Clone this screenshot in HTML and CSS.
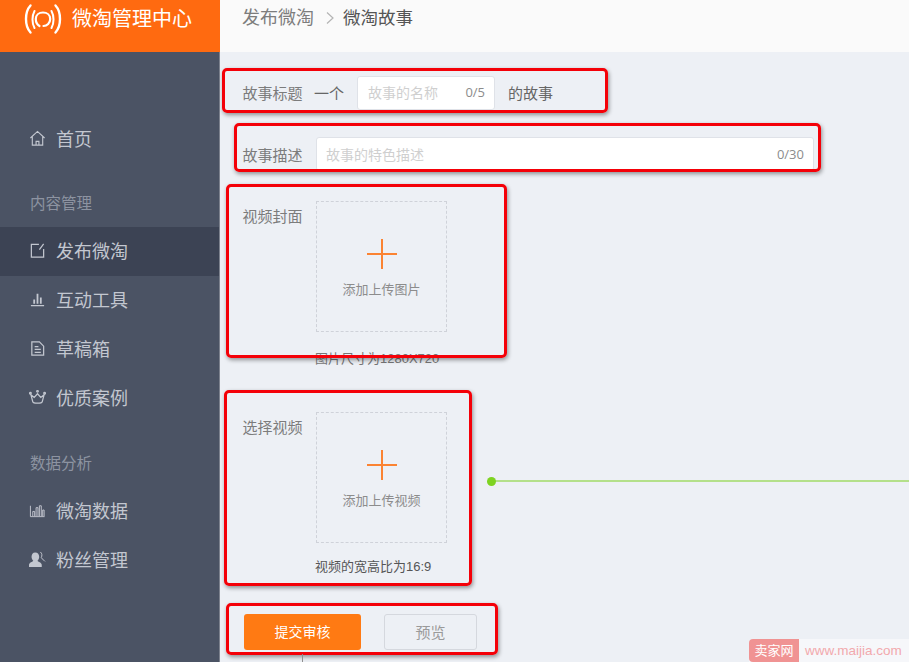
FILE: index.html
```html
<!DOCTYPE html>
<html lang="zh-CN">
<head>
    <meta charset="UTF-8">
    <meta name="viewport" content="width=device-width, initial-scale=1.0">
    <title>发布微淘</title>
    <link rel="stylesheet" href="styles.css">
</head>
<body>
    <div class="page">
        <aside class="sidebar">
            <div class="brand">
                <svg class="brand-logo" viewBox="0 0 38 32" fill="none" stroke="#fff" stroke-linecap="round">
                    <path d="M6.500 2.500C0.500 9 0.500 23 6.500 29.500" stroke-width="2.400"/>
                    <path d="M31.500 2.500C37.500 9 37.500 23 31.500 29.500" stroke-width="2.400"/>
                    <path d="M10.500 8C7.800 13 7.800 20 10.500 25" stroke-width="2"/>
                    <path d="M27.500 8C30.200 13 30.200 20 27.500 25" stroke-width="2"/>
                    <path d="M15.500 23C13 21.500 11.800 19 11.800 16C11.800 12 15 9.500 19 9.500C23 9.500 26.200 12 26.200 16C26.200 20 23 22.800 19.500 23" stroke-width="2.200"/>
                </svg>
                <span>微淘管理中心</span>
            </div>

            <nav class="nav">
                <a class="nav-item" href="#">
                    <svg class="nav-icon" viewBox="0 0 18 18" fill="none" stroke="currentColor" stroke-width="1.200">
                        <path d="M1.500 8.500L9 1.500L16.500 8.500M3.500 7V16H14.500V7M7.500 16V12H10.500V16"/>
                    </svg>
                    首页
                </a>

                <div class="nav-label">内容管理</div>
                <a class="nav-item active" href="#">
                    <svg class="nav-icon" viewBox="0 0 18 18" fill="none" stroke="currentColor" stroke-width="1.300">
                        <path d="M10.500 2.500H2.500V16H15.500V7.500M11 8L15.500 2"/>
                    </svg>
                    发布微淘
                </a>
                <a class="nav-item" href="#">
                    <svg class="nav-icon" viewBox="0 0 18 18" fill="none" stroke="currentColor">
                        <path d="M2 15.500H16" stroke-width="1.300"/>
                        <path d="M5.500 13.500V9M9 13.500V3M12.500 13.500V7" stroke-width="1.900"/>
                    </svg>
                    互动工具
                </a>
                <a class="nav-item" href="#">
                    <svg class="nav-icon" viewBox="0 0 18 18" fill="none" stroke="currentColor" stroke-width="1.300">
                        <path d="M3 2H11L15.500 6.500V16H3ZM6 7H10M6 10H12.500M6 13H12.500"/>
                    </svg>
                    草稿箱
                </a>
                <a class="nav-item" href="#">
                    <svg class="nav-icon" viewBox="0 0 18 18" fill="none" stroke="currentColor" stroke-width="1.300">
                        <path d="M2 6L4 13.500C4.500 15.500 13.500 15.500 14 13.500L16 6L12.500 9L9 5L5.500 9Z"/>
                        <circle cx="1.500" cy="4.500" r="0.900"/>
                        <circle cx="9" cy="2.500" r="0.900"/>
                        <circle cx="16.500" cy="4.500" r="0.900"/>
                    </svg>
                    优质案例
                </a>

                <div class="nav-label nav-label-data">数据分析</div>
                <a class="nav-item" href="#">
                    <svg class="nav-icon" viewBox="0 0 18 18" fill="none" stroke="currentColor" stroke-width="1">
                        <path d="M1.500 4V15.500H16.500M4 15V10H6V15M7.500 15V6H9.500V15M11 15V4H13V15M14.500 15V8.500H16V15"/>
                    </svg>
                    微淘数据
                </a>
                <a class="nav-item" href="#">
                    <svg class="nav-icon" viewBox="0 0 18 18" fill="currentColor">
                        <path d="M6.500 1.500C9.500 1.500 10.800 3.800 10.800 6.200C10.800 8 10 9.500 9 10.300C9.500 11.500 13.500 12 13.500 14.800V17H0V14.800C0 12 4 11.500 4.500 10.300C3.500 9.500 2.700 8 2.700 6.200C2.700 3.800 4 1.500 6.500 1.500Z"/>
                        <path d="M12 1C14 2.500 14 5 13 7C14 9 16 9.500 17 11" fill="none" stroke="currentColor" stroke-width="1"/>
                    </svg>
                    粉丝管理
                </a>
            </nav>
        </aside>

        <main class="main">
            <div class="crumbs">
                <span>发布微淘</span>
                <svg class="crumb-sep" viewBox="0 0 10 14" fill="none" stroke="#b4b4b4" stroke-width="1.200">
                    <path d="M2 1.500L8 7L2 12.500"/>
                </svg>
                <span class="crumb-current">微淘故事</span>
            </div>

            <form class="form">
                <div class="row row-title">
                    <label class="row-label">故事标题</label>
                    <span class="fix-text">一个</span>
                    <div class="field field-short">
                        <span class="placeholder">故事的名称</span>
                        <span class="count">0/5</span>
                    </div>
                    <span class="fix-text">的故事</span>
                </div>

                <div class="row row-desc">
                    <label class="row-label">故事描述</label>
                    <div class="field field-long">
                        <span class="placeholder">故事的特色描述</span>
                        <span class="count">0/30</span>
                    </div>
                </div>

                <div class="row row-upload">
                    <label class="row-label upload-label">视频封面</label>
                    <div class="upload">
                        <div class="plus"></div>
                        <span>添加上传图片</span>
                    </div>
                </div>
                <p class="tip">图片尺寸为1280X720</p>

                <div class="row row-video">
                    <label class="row-label upload-label">选择视频</label>
                    <div class="upload">
                        <div class="plus"></div>
                        <span>添加上传视频</span>
                    </div>
                </div>
                <p class="tip tip-video">视频的宽高比为16:9</p>

                <div class="actions">
                    <button type="button" class="btn btn-primary">提交审核</button>
                    <button type="button" class="btn btn-ghost">预览</button>
                </div>
            </form>
        </main>

        <!-- annotations drawn on top of the screenshot -->
        <div class="mark mark-title"></div>
        <div class="mark mark-desc"></div>
        <div class="mark mark-cover"></div>
        <div class="mark mark-video"></div>
        <div class="mark mark-actions"></div>

        <div class="callout"></div>
        <div class="stem"></div>

        <div class="watermark">
            <span class="watermark-name">卖家网</span>
            <span class="watermark-url">www.maijia.com</span>
        </div>
    </div>
</body>
</html>
```

FILE: styles.css
```css
* {
    margin: 0;
    padding: 0;
    box-sizing: border-box;
}

html, body {
    height: 100%;
    overflow: hidden;
}

body {
    font-family: "Liberation Sans", "Noto Sans CJK SC", sans-serif;
    background-color: #edf0f5;
    color: #666;
}

.page {
    position: relative;
    display: flex;
    height: 662px;
    overflow: hidden;
}

/* sidebar */
.sidebar {
    width: 220px;
    flex-shrink: 0;
    background: #4b5364;
    border-right: 1px solid #7d828e;
}

.brand {
    display: flex;
    align-items: flex-start;
    gap: 10px;
    height: 52px;
    margin-right: -1px;
    padding: 3px 0 0 24px;
    background: #ff6a10;
    color: #fff;
    font-size: 20px;
    line-height: 32px;
}

.brand-logo {
    width: 38px;
    height: 32px;
    flex-shrink: 0;
}

.nav {
    padding-top: 63px;
}

.nav-item {
    display: flex;
    align-items: center;
    gap: 10px;
    height: 49px;
    padding: 0 0 3px 29px;
    color: #c3c7d0;
    font-size: 18px;
    text-decoration: none;
}

.nav-item.active {
    background: #3c4354;
}

.nav-icon {
    width: 17px;
    height: 17px;
    margin-top: 1px;
    flex-shrink: 0;
}

.nav-label {
    height: 63px;
    padding: 30px 0 0 30px;
    color: #8d93a1;
    font-size: 15.5px;
    line-height: 20px;
}

.nav-label-data {
    height: 64px;
    padding-top: 31px;
}

/* main column */
.main {
    flex: 1;
    min-width: 0;
}

.crumbs {
    display: flex;
    align-items: flex-start;
    height: 52px;
    padding-left: 22px;
    background: #fafafa;
    color: #7d7d7d;
    font-size: 18px;
    line-height: 36px;
}

.crumb-sep {
    width: 10px;
    height: 14px;
    margin: 11px 8px 0 11px;
}

.crumb-current {
    color: #555;
    font-size: 17.500px;
}

.form {
    padding: 24px 0 0 22.500px;
    font-size: 15px;
}

.row {
    display: flex;
    align-items: center;
}

.row-label {
    color: #7c7c7c;
    width: 73.500px;
    padding-bottom: 2px;
    flex-shrink: 0;
}

.row-title .row-label {
    width: 71.500px;
}

.row-desc .row-label {
    padding-bottom: 0;
}

.fix-text {
    padding-bottom: 2px;
    color: #666;
}

.field {
    display: flex;
    justify-content: space-between;
    align-items: center;
    height: 34px;
    padding: 0 9px 2px 10px;
    background: #fff;
    border: 1px solid #dfe2e8;
    border-radius: 3px;
    font-size: 14px;
}

.field-short {
    width: 138px;
    margin: 0 13px 0 13px;
}

.field-long {
    width: 498px;
    padding: 0 9px 0 9px;
}

.placeholder {
    color: #cfcfcf;
}

.count {
    color: #8c8c8c;
    font-family: "Open Sans", sans-serif;
    font-size: 13px;
}

.row-desc {
    margin-top: 27px;
}

.row-upload {
    margin-top: 30px;
    align-items: flex-start;
}

.row-video {
    margin-top: 43px;
    align-items: flex-start;
}

.upload-label {
    margin-top: 4px;
}

.upload {
    display: flex;
    flex-direction: column;
    align-items: center;
    width: 131px;
    height: 131px;
    padding-top: 37px;
    border: 1px dashed #cfd2d9;
    color: #8c8c8c;
    font-size: 13px;
}

.plus {
    position: relative;
    width: 30px;
    height: 30px;
    margin-bottom: 10px;
}

.plus::before,
.plus::after {
    content: "";
    position: absolute;
    background: #fb8332;
}

.plus::before {
    left: 0;
    right: 0;
    top: 14px;
    height: 2px;
}

.plus::after {
    top: 0;
    bottom: 0;
    left: 14px;
    width: 2px;
}

.tip {
    margin: 17px 0 0 72.500px;
    color: #777;
    font-size: 13px;
    line-height: 20px;
}

.tip-video {
    margin-top: 14px;
    color: #555;
}

.actions {
    display: flex;
    gap: 23px;
    margin: 37px 0 0 1.500px;
}

.btn {
    height: 36px;
    padding-bottom: 2px;
    border-radius: 3px;
    font-family: inherit;
    font-size: 14px;
}

.btn-primary {
    width: 117px;
    border: none;
    background: #ff7a13;
    color: #fff;
}

.btn-ghost {
    width: 93px;
    border: 1px solid #d5d8de;
    background: #edf0f5;
    color: #9a9a9a;
    font-size: 15px;
}

/* red annotation boxes */
.mark {
    position: absolute;
    border: 3px solid #f40008;
    border-radius: 5px;
    box-shadow: 1px 2px 4px rgba(0, 0, 0, 0.4);
    pointer-events: none;
}

.mark-title {
    left: 222px;
    top: 68px;
    width: 386px;
    height: 45px;
}

.mark-desc {
    left: 234px;
    top: 123px;
    width: 587px;
    height: 49px;
}

.mark-cover {
    left: 226px;
    top: 184px;
    width: 281px;
    height: 174px;
}

.mark-video {
    left: 224px;
    top: 390px;
    width: 248px;
    height: 196px;
}

.mark-actions {
    left: 226px;
    top: 603px;
    width: 272px;
    height: 52px;
}

.callout {
    position: absolute;
    left: 491px;
    right: 0;
    top: 480px;
    height: 2px;
    background: #b4e08a;
}

.callout::before {
    content: "";
    position: absolute;
    left: -4px;
    top: -3px;
    width: 9px;
    height: 9px;
    border-radius: 50%;
    background: #7ed321;
}

.stem {
    position: absolute;
    left: 302px;
    top: 654px;
    bottom: 0;
    width: 1px;
    background: #8f8f8f;
}

.watermark {
    position: absolute;
    right: 0;
    bottom: 0;
    display: flex;
    width: 160px;
    height: 23px;
    border-radius: 4px 0 0 0;
    background: #f6f7fa;
    font-size: 13px;
    line-height: 23px;
}

.watermark-name {
    width: 50px;
    border-radius: 4px 0 0 4px;
    background: #f09393;
    color: #fff;
    text-align: center;
}

.watermark-url {
    padding-left: 6px;
    color: #f2a9ad;
    font-size: 13.500px;
}
```
